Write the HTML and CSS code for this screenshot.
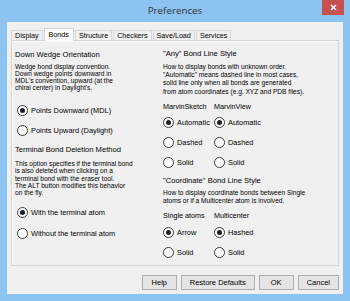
FILE: index.html
```html
<!DOCTYPE html>
<html>
<head>
<meta charset="utf-8">
<title>Preferences</title>
<link rel="stylesheet" href="styles.css">
</head>
<body>
<div class="window">
  <div class="titlebar">
    <span></span>
    <div class="title">Preferences</div>
    <div class="close"><svg width="7" height="7" viewBox="0 0 7 7"><path d="M1 1L6 6M6 1L1 6" stroke="#fff" stroke-width="1.5"/></svg></div>
  </div>
  <div class="client">
    <div class="tabs">
      <div class="tab">Display</div>
      <div class="tab sel">Bonds</div>
      <div class="tab">Structure</div>
      <div class="tab">Checkers</div>
      <div class="tab">Save/Load</div>
      <div class="tab">Services</div>
    </div>
    <div class="panel">
      <div class="col left">
        <div class="h">Down Wedge Orientation</div>
        <p class="desc d-wedge">Wedge bond display convention.<br>Down wedge points downward in<br>MDL's convention, upward (at the<br>chiral center) in Daylight's.</p>
        <div class="radio m13"><span class="dot on"></span>Points Downward (MDL)</div>
        <div class="radio m8"><span class="dot"></span>Points Upward (Daylight)</div>
        <div class="h m9">Terminal Bond Deletion Method</div>
        <p class="desc d-term">This option specifies if the terminal bond<br>is also deleted when clicking on a<br>terminal bond with the eraser tool.<br>The ALT button modifies this behavior<br>on the fly.</p>
        <div class="radio m10"><span class="dot on"></span>With the terminal atom</div>
        <div class="radio m9"><span class="dot"></span>Without the terminal atom</div>
      </div>
      <div class="col right">
        <div class="h">"Any" Bond Line Style</div>
        <p class="desc d-any">How to display bonds with unknown order.<br>"Automatic" means dashed line in most cases,<br>solid line only when all bonds are generated<br>from atom coordinates (e.g. XYZ and PDB files).</p>
        <div class="pair m6"><span>MarvinSketch</span><span>MarvinView</span></div>
        <div class="pair rows m5">
          <div class="radio"><span class="dot on"></span>Automatic</div>
          <div class="radio"><span class="dot on"></span>Automatic</div>
        </div>
        <div class="pair rows m8">
          <div class="radio"><span class="dot"></span>Dashed</div>
          <div class="radio"><span class="dot"></span>Dashed</div>
        </div>
        <div class="pair rows m8">
          <div class="radio"><span class="dot"></span>Solid</div>
          <div class="radio"><span class="dot"></span>Solid</div>
        </div>
        <div class="h m7">"Coordinate" Bond Line Style</div>
        <p class="desc d-coord">How to display coordinate bonds between Single<br>atoms or if a Multicenter atom is involved.</p>
        <div class="pair m6"><span>Single atoms</span><span>Multicenter</span></div>
        <div class="pair rows m6">
          <div class="radio"><span class="dot on"></span>Arrow</div>
          <div class="radio"><span class="dot on"></span>Hashed</div>
        </div>
        <div class="pair rows m8">
          <div class="radio"><span class="dot"></span>Solid</div>
          <div class="radio"><span class="dot"></span>Solid</div>
        </div>
      </div>
    </div>
    <div class="buttons">
      <div class="btn">Help</div>
      <div class="btn">Restore Defaults</div>
      <div class="btn">OK</div>
      <div class="btn">Cancel</div>
    </div>
  </div>
</div>
</body>
</html>
```
FILE: styles.css
```css
html, body {
  margin: 0;
  padding: 0;
}
body {
  width: 350px;
  height: 301px;
  overflow: hidden;
  background: #8dc3f1;
  font-family: "Liberation Sans", Arial, sans-serif;
  color: #000;
}
.window {
  height: 301px;
  display: flex;
  flex-direction: column;
}
.titlebar {
  height: 22px;
  display: grid;
  grid-template-columns: 1fr auto 1fr;
  align-items: start;
}
.title {
  font-family: "Open Sans", "Liberation Sans", sans-serif;
  font-size: 9.8px;
  line-height: 22px;
  color: #333;
}
.close {
  justify-self: end;
  margin-right: 6px;
  width: 22px;
  height: 15px;
  background: #c75050;
  display: flex;
  align-items: center;
  justify-content: center;
}
.client {
  margin: 0 7px 7px;
  height: 272px;
  box-sizing: border-box;
  background: #f0f0f0;
  padding: 6px 4px 0;
  display: flex;
  flex-direction: column;
}
.tabs {
  display: flex;
  align-items: flex-end;
  height: 13px;
  margin-bottom: -1px;
  position: relative;
  z-index: 1;
}
.tab {
  box-sizing: border-box;
  height: 10px;
  margin-bottom: 1px;
  padding: 0 3px;
  border: 1px solid #d9d9d9;
  border-bottom: none;
  background: #f0f0f0;
  font-size: 7.2px;
  line-height: 9px;
  white-space: nowrap;
}
.tab + .tab {
  margin-left: 1px;
}
.tab.sel {
  height: 13px;
  margin-bottom: 0;
  padding: 0 4px;
  background: #fcfcfc;
  border-color: #d4d4d4;
  line-height: 11px;
}
.panel {
  height: 226px;
  box-sizing: border-box;
  border: 1px solid #d4d4d4;
  box-shadow: inset 1px 1px 0 #fafafa;
  background: #f0f0f0;
  padding: 8px 0 0 3px;
  display: grid;
  grid-template-columns: 148px 1fr;
  align-items: start;
}
.col {
  display: flex;
  flex-direction: column;
  align-items: flex-start;
}
.col.left {
  padding-top: 1px;
}
.h {
  font-size: 7.6px;
  line-height: 10px;
  white-space: nowrap;
}
.desc {
  margin: 0;
  font-size: 6.6px;
  white-space: nowrap;
}
.d-wedge { margin-top: 3px; line-height: 7px; }
.d-term { margin-top: 5px; line-height: 7.25px; }
.d-any { margin-top: 4px; line-height: 8.2px; }
.d-coord { margin-top: 3px; line-height: 8px; }
.radio {
  display: flex;
  align-items: center;
  height: 12px;
  font-size: 7.4px;
  white-space: nowrap;
}
.left .radio {
  margin-left: 2px;
}
.dot {
  box-sizing: border-box;
  width: 11px;
  height: 11px;
  margin-right: 3px;
  border: 1px solid #3a3a3a;
  border-radius: 50%;
  background: #fff;
  display: flex;
  align-items: center;
  justify-content: center;
  flex: none;
}
.dot.on::after {
  content: "";
  width: 5px;
  height: 5px;
  border-radius: 50%;
  background: #1e1e1e;
}
.pair {
  display: grid;
  grid-template-columns: 51px auto;
  font-size: 7.2px;
  line-height: 10px;
  white-space: nowrap;
}
.pair.rows {
  line-height: normal;
}
.m5 { margin-top: 5px; }
.m6 { margin-top: 6px; }
.m7 { margin-top: 7px; }
.m8 { margin-top: 8px; }
.m9 { margin-top: 9px; }
.m10 { margin-top: 10px; }
.m13 { margin-top: 13px; }
.buttons {
  display: flex;
  justify-content: flex-end;
  gap: 4px;
  margin-top: 9px;
}
.btn {
  box-sizing: border-box;
  height: 15px;
  min-width: 35px;
  padding: 0 8px;
  border: 1px solid #acacac;
  background: #e5e5e5;
  font-size: 7.5px;
  line-height: 13px;
  text-align: center;
  white-space: nowrap;
}
```
